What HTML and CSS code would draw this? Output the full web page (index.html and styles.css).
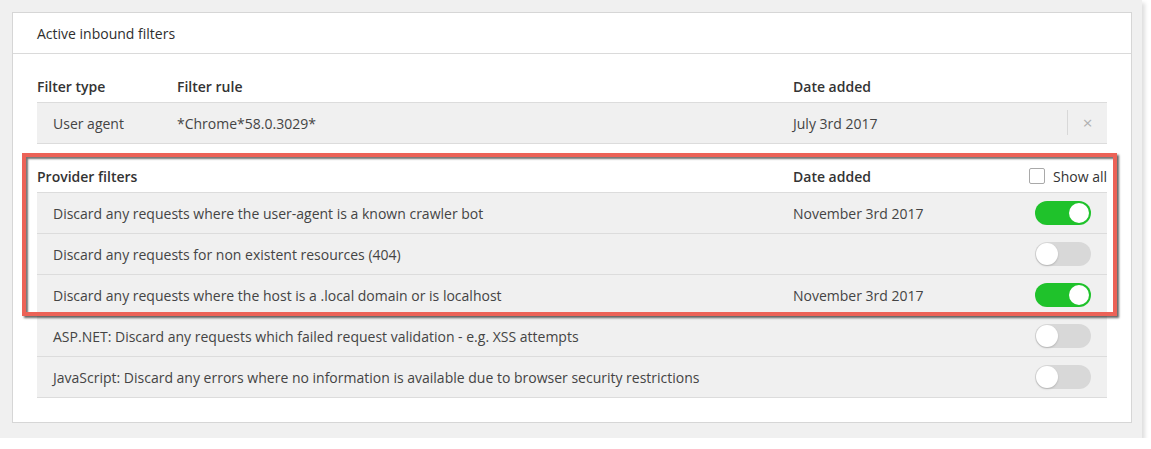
FILE: index.html
```html
<!DOCTYPE html>
<html lang="en">
<head>
<meta charset="utf-8">
<title>Active inbound filters</title>
<link rel="stylesheet" href="styles.css">
</head>
<body>
<div class="frame">
  <section class="panel">
    <header class="panel-header">Active inbound filters</header>
    <div class="panel-body">
      <div class="table filters">
        <div class="row head">
          <div class="cell">Filter type</div>
          <div class="cell">Filter rule</div>
          <div class="cell">Date added</div>
          <div class="cell"></div>
        </div>
        <div class="row item">
          <div class="cell first">User agent</div>
          <div class="cell">*Chrome*58.0.3029*</div>
          <div class="cell">July 3rd 2017</div>
          <div class="cell remove"><span class="x">×</span></div>
        </div>
      </div>

      <div class="table providers">
        <div class="highlight">
          <div class="row head">
            <div class="cell">Provider filters</div>
            <div class="cell">Date added</div>
            <div class="cell showall"><span class="checkbox"></span>Show all</div>
          </div>
          <div class="row item">
            <div class="cell first">Discard any requests where the user-agent is a known crawler bot</div>
            <div class="cell">November 3rd 2017</div>
            <div class="cell toggle-cell"><span class="toggle on"></span></div>
          </div>
          <div class="row item">
            <div class="cell first">Discard any requests for non existent resources (404)</div>
            <div class="cell"></div>
            <div class="cell toggle-cell"><span class="toggle"></span></div>
          </div>
          <div class="row item">
            <div class="cell first">Discard any requests where the host is a .local domain or is localhost</div>
            <div class="cell">November 3rd 2017</div>
            <div class="cell toggle-cell"><span class="toggle on"></span></div>
          </div>
        </div>
        <div class="row item">
          <div class="cell first">ASP.NET: Discard any requests which failed request validation - e.g. XSS attempts</div>
          <div class="cell"></div>
          <div class="cell toggle-cell"><span class="toggle"></span></div>
        </div>
        <div class="row item">
          <div class="cell first">JavaScript: Discard any errors where no information is available due to browser security restrictions</div>
          <div class="cell"></div>
          <div class="cell toggle-cell"><span class="toggle"></span></div>
        </div>
      </div>
    </div>
  </section>
</div>
</body>
</html>
```

FILE: styles.css
```css
html, body {
  margin: 0;
  padding: 0;
  background: #ffffff;
}

body {
  font-family: "Open Sans", "Noto Sans", "Liberation Sans", sans-serif;
  font-size: 14px;
  color: #444;
}

.frame {
  box-sizing: border-box;
  width: 1142px;
  height: 438px;
  padding: 12px 10px 15px 12px;
  background: #f0f0f0;
  box-shadow: 3px 3px 4px rgba(0, 0, 0, 0.13);
}

.panel {
  box-sizing: border-box;
  height: 100%;
  background: #fff;
  border: 1px solid #d6d6d6;
  display: flex;
  flex-direction: column;
}

.panel-header {
  height: 40px;
  padding: 0 24px;
  display: flex;
  align-items: center;
  color: #2e2e2e;
  border-bottom: 1px solid #dadada;
}

.panel-body {
  padding: 16px 24px 24px;
}

.row {
  display: grid;
  align-items: center;
  box-sizing: border-box;
  border-bottom: 1px solid #dcdcdc;
}

.row.head {
  height: 33px;
  font-weight: 600;
  color: #333;
}

.row.item {
  height: 41px;
  background: #f0f0f0;
  color: #444;
}

.filters .row {
  grid-template-columns: 140px 616px 1fr 40px;
}

.providers {
  margin-top: 16px;
}

.providers .row {
  grid-template-columns: 756px 1fr auto;
}

.cell.first {
  padding-left: 16px;
}

.filters .cell:first-child {
  white-space: nowrap;
}

.remove {
  align-self: stretch;
  display: flex;
  align-items: center;
  justify-content: center;
  margin: 7px 0 8px;
  border-left: 1px solid #d8d8d8;
}

.x {
  color: #b0b0b0;
  font-size: 17px;
  line-height: 1;
}

.showall {
  display: flex;
  align-items: center;
  gap: 8px;
  font-weight: 400;
  color: #333;
}

.checkbox {
  box-sizing: border-box;
  width: 16px;
  height: 16px;
  border: 1.5px solid #a9a9a9;
  border-radius: 2px;
  background: #fff;
}

.toggle-cell {
  padding-right: 16px;
  display: flex;
  align-items: center;
}

.toggle {
  position: relative;
  box-sizing: border-box;
  width: 56px;
  height: 24px;
  border-radius: 12px;
  background: #d8d8d8;
}

.toggle::after {
  content: "";
  position: absolute;
  top: 1px;
  left: 1px;
  width: 22px;
  height: 22px;
  border-radius: 50%;
  background: #fff;
  box-shadow: 0 1px 2px rgba(0, 0, 0, 0.18);
}

.toggle.on {
  background: #1fc22b;
}

.toggle.on::after {
  left: auto;
  right: 2px;
  top: 2px;
  width: 20px;
  height: 20px;
  box-shadow: none;
}

.highlight {
  position: relative;
}

.highlight::after {
  content: "";
  position: absolute;
  top: -7px;
  left: -15px;
  right: -10px;
  bottom: 0;
  border: 4px solid #ec6257;
  box-shadow: 2px 2px 2px rgba(0, 0, 0, 0.6), inset 2px 2px 2px rgba(0, 0, 0, 0.55);
  pointer-events: none;
}
```
